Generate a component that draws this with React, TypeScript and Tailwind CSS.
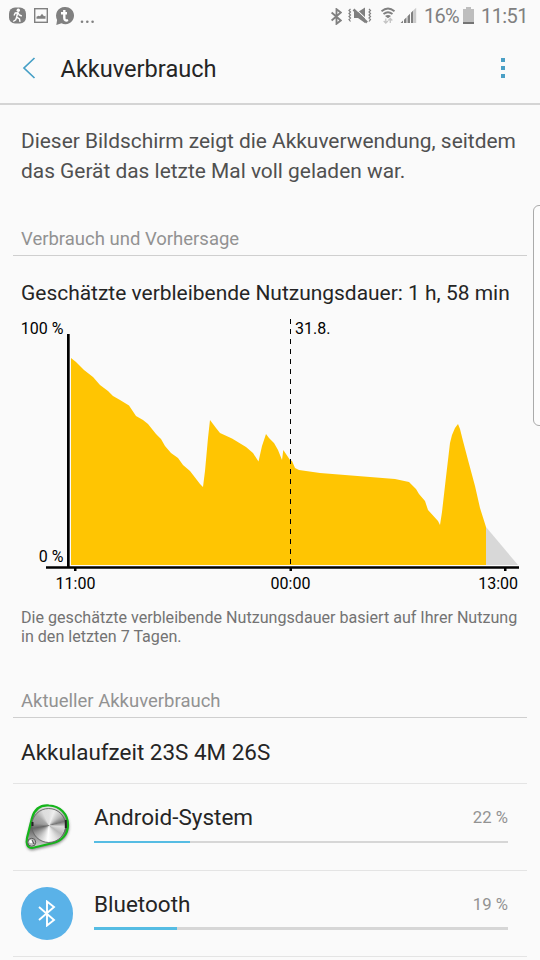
import type { ReactNode } from 'react'

interface Usage {
  name: string
  percent: number
  fill: number
  icon: ReactNode
  row: string
  bar: string
}

const LEVELS =
  '71,565 71,358 76,362 84,370 93,377 100,385 108,391 113,396 120,400 129,405.5 136,416 143,420 148,424 156,434 161,439 165,446 171,453 178,458 183,465 190,471 200,484 203,487 205,471 208,438 210,420 216,428 220,433 232,438.5 246,447 253,453 258.5,461.5 262,446 266,434 269,438 274,443 278,450 282,460 283.3,450 290,460 292,461 295,468 299,470 320,473 345,475 370,477 395,479 409,482 416,489 419,494 425,501 428,510 438,521 440,525 442,512 446,477 450,443 452,435 455,428 458,424 460,429 463,441 468,460 475,486 480,508 486,527 486,565'

const SHELL = 'M32 818C35 807 42 805 49 805.5C60 806 68 814 68 825C68 834 62 841 53 843L32 848C27 848 26 843 27 838Z'

function BluetoothGlyph({ className, width }: { className: string; width: number }) {
  return (
    <svg viewBox="0 0 18 27" className={className} fill="none" stroke="currentColor" strokeWidth={width}>
      <path d="M1 7 16 20 9 25.5v-24l7 5.5L1 20" />
    </svg>
  )
}

function SystemIcon() {
  return (
    <svg viewBox="10 795 75 65" className="mt-px -ml-[11px] h-[65px] w-[75px] shrink-0">
      <defs>
        <linearGradient id="rim" x2="0" y2="1">
          <stop stopColor="#eee" />
          <stop offset="0.5" stopColor="#555" />
          <stop offset="1" stopColor="#ddd" />
        </linearGradient>
        <filter id="soft" x="-30%" y="-30%" width="160%" height="160%">
          <feGaussianBlur stdDeviation="1.8" />
        </filter>
        <clipPath id="disc">
          <circle cx="48.7" cy="825.5" r="16.6" />
        </clipPath>
      </defs>
      <path d={SHELL} fill="#444" stroke="#444" opacity="0.7" filter="url(#soft)" transform="translate(.3 1.7)" />
      <path d={SHELL} fill="url(#rim)" stroke="#15b51b" strokeWidth="2.2" />
      <g clipPath="url(#disc)">
        <foreignObject x="32" y="808" width="34" height="35">
          <div className="h-[35px] w-[34px] bg-[conic-gradient(#e0e0e0,#eee_20deg,#bbb_50deg,#777_75deg,#ddd_95deg,#b8b8b8_125deg,#e4e4e4_155deg,#fff_185deg,#ccc_215deg,#999_240deg,#666_260deg,#999_280deg,#aaa_310deg,#ddd_335deg,#e0e0e0)]" />
        </foreignObject>
      </g>
      <circle cx="48.7" cy="825.5" r="17" fill="none" stroke="#666" strokeWidth="0.9" />
      <path d="M32.5 822v4M65.8 820v8" stroke="#222" strokeWidth="2" />
      <circle cx="31.7" cy="842.3" r="4" fill="#bbb" stroke="#555" />
      <circle cx="31" cy="841.5" r="1.8" fill="#fff" />
      <path d="m32 840 2 4" stroke="#444" />
    </svg>
  )
}

const USAGES: Usage[] = [
  { name: 'Android-System', percent: 22, fill: 96, icon: <SystemIcon />, row: 'h-[87px]', bar: 'mt-[8px] h-[2px]' },
  {
    name: 'Bluetooth',
    percent: 19,
    fill: 83,
    row: 'h-[86px]',
    bar: 'mt-[7px] h-[3px]',
    icon: (
      <div className="flex h-[53px] w-[52px] shrink-0 items-center justify-center rounded-full bg-[#5ab2e8] text-white">
        <BluetoothGlyph className="h-[27px] w-[18px]" width={1.9} />
      </div>
    ),
  },
]

function StatusBar() {
  return (
    <div className="flex h-8 items-center justify-between text-[#808080]">
      <svg viewBox="0 0 100 32" className="h-8 w-[100px]" fill="currentColor">
        <rect x="9" y="7.5" width="17" height="16" rx="6" />
        <circle cx="18.3" cy="10.3" r="1.7" fill="#fff" />
        <path d="m14 15.5 1.3-2.5 2.7-.3 1.3 2.3 2.5 1M17.6 13l-.9 4 2.8 1.8.5 3M16.7 17l-1 2.8-2.5 1.7" fill="none" stroke="#fff" strokeWidth="1.4" />
        <rect x="34.7" y="8.7" width="12.6" height="13.6" fill="none" stroke="currentColor" strokeWidth="1.4" />
        <path d="M36.5 18.7v-2l2-1 1.5.5 2-2.5 2 2.5 1.5-.5v3z" />
        <path d="M64.5 7a8.6 8.6 0 1 1-3 16.2L56.3 25l.8-5.1A8.7 8.7 0 0 1 64.5 7z" />
        <path d="M64.3 10v8c0 2.3 1.5 3 3.7 2M61 13.3h6" fill="none" stroke="#fff" strokeWidth="2.4" />
        <circle cx="82" cy="21.7" r="1.3" />
        <circle cx="87.3" cy="21.7" r="1.3" />
        <circle cx="92.6" cy="21.7" r="1.3" />
      </svg>
      <div className="flex h-8 items-center text-[20px]">
        <BluetoothGlyph className="mr-[5px] h-[17px] w-[11px]" width={3} />
        <svg viewBox="347 0 71 32" className="h-8 w-[71px]" fill="none" stroke="currentColor">
          <path d="m350.5 9-1.5 1.5 1.5 1.5-1.5 1.5 1.5 1.5-1.5 1.5 1.5 1.5-1.5 1.5 1.5 2M369 9l1.5 1.5L369 12l1.5 1.5L369 15l1.5 1.5L369 18l1.5 1.5-1.5 2" strokeWidth="1.2" />
          <path d="M354 12h4l7-4.5v15.5l-7-5h-4z" fill="currentColor" stroke="none" />
          <path d="m355 8.3 13 12.4" stroke="#fafafa" strokeWidth="1.1" />
          <path d="m353.5 9.5 13.5 13" strokeWidth="2.5" />
          <path d="M381.5 11.2q6.5-5.5 13 0M383.5 14q4.5-3.6 9 0" strokeWidth="1.8" />
          <path d="M385 16q3-2 6 0l-3 2.3z" fill="currentColor" stroke="none" />
          <path d="m383.7 21 2.1 2 2.1-2M385.8 18.5v4.3M388.3 20.5l2-2 2 2M390.3 19v4" stroke="#c4c4c4" strokeWidth="1.3" />
          <path d="M400.5 23l2.5-2.5V23zM404 19.7l2.5-2.5V23H404zM407.5 16.2l2.5-2.5V23h-2.5zM411 12.7l2.2-2.2V23H411z" fill="currentColor" stroke="none" />
          <path d="m413.2 10.5 3-2.8V23h-3z" fill="#cbcbcb" stroke="none" />
        </svg>
        <span className="ml-[6px] w-[38px] whitespace-nowrap tracking-[-0.7px]">16%</span>
        <svg viewBox="0 0 12 18" className="mb-px ml-px h-[18px] w-3">
          <path d="M3 2V0h5v2h3v15H0V2z" fill="#bebebe" />
          <path d="M0 15h11v2H0z" fill="#747474" />
        </svg>
        <span className="ml-[6px] w-[59px] whitespace-nowrap tracking-[-0.6px]">11:51</span>
      </div>
    </div>
  )
}

function BatteryChart() {
  return (
    <svg viewBox="0 310 540 290" className="h-[290px] w-[540px]" fontSize="16" fill="#000">
      <polygon points={LEVELS} fill="#ffc502" />
      <path d="M486 527 518 565H486z" fill="#d8d8d8" />
      <path d="M67 334h2.7v233H67z" />
      <path d="M46 566.3h473v2.4H46zM74 568h2.5v3H74zM289.5 568h2.5v3h-2.5zM504 568h2.5v3H504z" />
      <path d="M290.5 319v247" stroke="#000" strokeDasharray="5 5" />
      <text x="63.5" y="334" textAnchor="end">100 %</text>
      <text x="63.5" y="562" textAnchor="end">0 %</text>
      <text x="295" y="334">31.8.</text>
      <text x="75.5" y="589" textAnchor="middle">11:00</text>
      <text x="290.5" y="589" textAnchor="middle">00:00</text>
      <text x="518" y="589" textAnchor="end">13:00</text>
    </svg>
  )
}

function SectionTitle({ children }: { children: ReactNode }) {
  return (
    <h2 className="mx-[13px] flex h-[34px] items-center border-b border-[#cfcfcf] px-2 pt-[2px] text-[18.5px] text-[#929292]">
      {children}
    </h2>
  )
}

export default function App() {
  return (
    <div className="relative h-[960px] w-[540px] overflow-hidden bg-[#fafafa] font-[Roboto,sans-serif] text-[#252525]">
      <StatusBar />
      <header className="flex h-[73px] items-center border-b-2 border-[#d4d4d4] pl-[22px]">
        <svg viewBox="0 0 14 22" className="h-[22px] w-[14px]" fill="none" stroke="#459fc6" strokeWidth="1.7">
          <path d="M12.5 1 2 11l10.5 10" />
        </svg>
        <h1 className="ml-[24.5px] pt-[4px] text-[23.6px]">Akkuverbrauch</h1>
        <div className="mr-[35px] ml-auto flex flex-col gap-1">
          <i className="h-1 w-1 bg-[#4a9fc5]" />
          <i className="h-1 w-1 bg-[#4a9fc5]" />
          <i className="h-1 w-1 bg-[#4a9fc5]" />
        </div>
      </header>

      <main>
        <p className="h-[117px] pt-[21px] pl-[21px] text-[20.9px] leading-[30px] whitespace-nowrap text-[#505050]">
          Dieser Bildschirm zeigt die Akkuverwendung, seitdem<br />
          das Gerät das letzte Mal voll geladen war.
        </p>
        <SectionTitle>Verbrauch und Vorhersage</SectionTitle>
        <div className="h-[54px] pt-[22px] pl-[21px] text-[20.96px] leading-[30px] whitespace-nowrap">
          Geschätzte verbleibende Nutzungsdauer: 1 h, 58 min
        </div>
        <BatteryChart />
        <p className="h-[84px] pt-[8px] pl-[21px] text-[16.1px] leading-[19px] whitespace-nowrap text-[#737373]">
          Die geschätzte verbleibende Nutzungsdauer basiert auf Ihrer Nutzung<br />
          in den letzten 7 Tagen.
        </p>
        <SectionTitle>Aktueller Akkuverbrauch</SectionTitle>
        <div className="mx-[13px] flex h-[66px] items-center border-b border-[#e4e4e4] pt-[5px] pl-2 text-[22.45px]">
          Akkulaufzeit 23S 4M 26S
        </div>
        {USAGES.map(({ name, percent, fill, icon, row, bar }) => (
          <div key={name} className={`mx-[13px] flex border-b border-[#e4e4e4] ${row}`}>
            <div className="flex w-[81px] items-center pl-2">{icon}</div>
            <div className="w-[414px] pt-[19px]">
              <div className="flex h-[30px] items-center justify-between">
                <span className="text-[22.5px]">{name}</span>
                <span className="text-[16.7px] text-[#929292]">{percent} %</span>
              </div>
              <div className={`bg-[#d6d6d6] ${bar}`}>
                <div className="h-full bg-[#55bce3]" style={{ width: fill }} />
              </div>
            </div>
          </div>
        ))}
      </main>
      {/* edge panel handle */}
      <div className="absolute top-[205px] left-[533px] h-[221px] w-5 rounded-[6px] border border-[#aaa] bg-[#fcfcfc]" />
    </div>
  )
}
